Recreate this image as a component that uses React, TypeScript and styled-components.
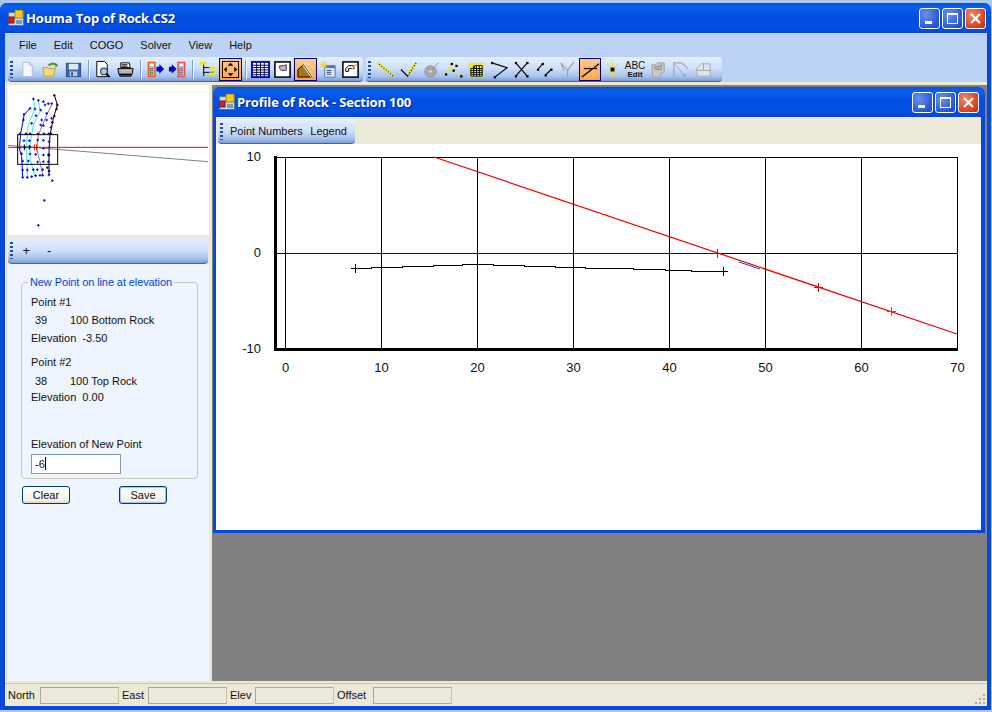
import React, { ReactNode } from 'react';
import styled, { createGlobalStyle } from 'styled-components';

const GlobalStyle = createGlobalStyle`
    html, body {
        margin: 0;
        padding: 0;
        background: #a9c8ea;
        overflow: hidden;
    }
    * {
        box-sizing: border-box;
    }
`;

const UI_FONT = `"Liberation Sans", Arial, sans-serif`;

const Frame = styled.div`
    width: 991px;
    height: 707px;
    margin-top: 3px;
    padding: 0 4px 4px 5px;
    display: flex;
    flex-direction: column;
    background: #0648d8;
    border-radius: 7px 7px 0 0;
    font-family: ${UI_FONT};
    font-size: 11px;
    color: #111;
`;

const TitleBar = styled.div<{ $child?: boolean }>`
    height: 30px;
    flex: none;
    display: flex;
    align-items: center;
    gap: 2px;
    margin: 0 ${(p) => (p.$child ? '-3px' : '-4px')} 0 ${(p) => (p.$child ? '-3px' : '-5px')};
    padding: 0 5px 0 ${(p) => (p.$child ? '6px' : '8px')};
    border-radius: 7px 7px 0 0;
    background: linear-gradient(180deg, #0650dc 0%, #0860ee 12%, #024ee0 45%, #0250e6 75%, #0648d4 100%);
`;

const TitleText = styled.span`
    flex: 1;
    font-family: "Open Sans", "Liberation Sans", sans-serif;
    font-weight: 700;
    font-size: 13px;
    letter-spacing: -0.15px;
    color: #fff;
    text-shadow: 1px 1px 1px #0a2a90;
`;

const CaptionButtons = styled.div`
    display: flex;
    gap: 2px;
`;

const CaptionButton = styled.div<{ $close?: boolean }>`
    width: 21px;
    height: 21px;
    display: flex;
    align-items: center;
    justify-content: center;
    border: 1px solid #fff;
    border-radius: 3px;
    background: ${(p) =>
        p.$close
            ? 'radial-gradient(circle at 30% 30%, #ee8a68, #d8401c 70%, #c03010)'
            : 'radial-gradient(circle at 30% 30%, #6a92ee, #2a58d8 70%, #1c44c0)'};
`;

const MenuBar = styled.div`
    height: 24px;
    flex: none;
    display: flex;
    align-items: center;
    padding-left: 14px;
    gap: 17px;
    background: #bdd3f6;
`;

const MenuItem = styled.span`
    font-size: 11px;
`;

const ToolRow = styled.div`
    height: 25px;
    flex: none;
    display: flex;
    gap: 3px;
    padding-left: 3px;
    background: #bdd3f6;
`;

const Strip = styled.div<{ $w: number }>`
    width: ${(p) => p.$w}px;
    height: 25px;
    display: flex;
    align-items: center;
    padding-left: 2px;
    border-radius: 3px 3px 4px 4px;
    border-bottom: 1px solid #3c64a8;
    background: linear-gradient(180deg, #e4effd 0%, #cfe0fa 45%, #a9c4ee 80%, #7a9ed8 100%);
`;

const Grip = styled.div`
    width: 3px;
    height: 17px;
    flex: none;
    margin-right: 3.5px;
    background: repeating-linear-gradient(180deg, #28508c 0 2px, transparent 2px 4px);
`;

const ToolButton = styled.div<{ $on?: boolean }>`
    width: 22.7px;
    height: 23px;
    flex: none;
    display: flex;
    align-items: center;
    justify-content: center;
    ${(p) =>
        p.$on
            ? 'border: 1px solid #000080; background: linear-gradient(180deg, #ffcb8a, #ffa24a);'
            : ''}
`;

const ToolSep = styled.div`
    width: 1px;
    height: 19px;
    flex: none;
    margin: 0 3px;
    background: #7c9ccc;
    box-shadow: 1px 0 0 #f4f8ff;
`;

const Body = styled.div`
    flex: 1;
    min-height: 0;
    display: flex;
    padding: 3px 0 2px 3px;
    background: #ece9d8;
`;

const SideBar = styled.div`
    width: 201px;
    flex: none;
    display: flex;
    flex-direction: column;
`;

const MapPane = styled.div`
    height: 150px;
    flex: none;
    background: #fff;
`;

const PaneBar = styled.div`
    height: 26px;
    flex: none;
    margin-top: 3px;
    margin-right: 1px;
    display: flex;
    align-items: center;
    padding-left: 2px;
    font-size: 13px;
    border-radius: 3px 3px 4px 4px;
    border-bottom: 1px solid #3c64a8;
    background: linear-gradient(180deg, #e4effd 0%, #cfe0fa 50%, #a9c4ee 80%, #7a9ed8 100%);
`;

const PaneButtons = styled.div`
    display: flex;
    gap: 17px;
    margin-left: 6px;
`;

const FormPane = styled.div`
    flex: 1;
    padding: 12px 11px 0 13px;
    background: #eef5fe;
`;

const Group = styled.fieldset`
    margin: 0;
    width: 177px;
    height: 203px;
    padding: 3px 0 0 9px;
    border: 1px solid #c8c8bc;
    border-radius: 4px;
`;

const GroupTitle = styled.legend`
    padding: 0 2px;
    margin-left: -3px;
    color: #0046d5;
    font-size: 11px;
    letter-spacing: -0.1px;
`;

const FieldLine = styled.div<{ $gap?: number }>`
    height: 15px;
    line-height: 15px;
    margin-top: ${(p) => p.$gap ?? 0}px;
    white-space: nowrap;
`;

const PointNo = styled.span`
    display: inline-block;
    width: 39px;
    padding-left: 4px;
`;

const ElevationInput = styled.div`
    width: 90px;
    height: 20px;
    margin-top: 2px;
    padding: 1px 3px;
    line-height: 16px;
    font-size: 11px;
    background: #fff;
    border: 1px solid #7f9db9;
`;

const Caret = styled.span`
    display: inline-block;
    width: 1px;
    height: 13px;
    vertical-align: -2px;
    background: #000;
`;

const ButtonRow = styled.div`
    display: flex;
    gap: 49px;
    margin: 7px 0 0 1px;
`;

const PushButton = styled.div<{ $def?: boolean }>`
    width: 48px;
    height: 18px;
    line-height: 16px;
    text-align: center;
    border: 1px solid #003c74;
    border-radius: 3px;
    background: linear-gradient(180deg, #fff, #f2f1ea 85%, #d8d4c8);
    ${(p) => (p.$def ? 'box-shadow: inset 0 0 0 1px #a8c4ee;' : '')}
`;

const Splitter = styled.div`
    width: 3px;
    flex: none;
`;

const MdiArea = styled.div`
    flex: 1;
    padding: 2px 2px 0 1px;
    background: #808080;
`;

const ChildWindow = styled.div`
    height: 446px;
    padding: 0 4px 3px 3px;
    display: flex;
    flex-direction: column;
    background: #0648d8;
    border-radius: 7px 7px 0 0;
`;

const ChildToolRow = styled.div`
    height: 27px;
    flex: none;
    padding: 2px 0 0 2px;
    background: #ece9d8;
`;

const ChildStrip = styled.div`
    width: 137px;
    height: 25px;
    display: flex;
    align-items: center;
    padding-left: 2px;
    white-space: nowrap;
    border-radius: 3px 3px 4px 4px;
    border-bottom: 1px solid #3c64a8;
    background: linear-gradient(180deg, #e4effd 0%, #cfe0fa 50%, #a9c4ee 80%, #7a9ed8 100%);
`;

const StripLabel = styled.span`
    padding: 0 4px 0 3.5px;
`;

const ChartPane = styled.div`
    flex: 1;
    background: #fff;
    overflow: hidden;
`;

const StatusBar = styled.div`
    height: 23px;
    flex: none;
    display: flex;
    align-items: center;
    padding-left: 3px;
    border-top: 1px solid #c8c5b2;
    background: #ece9d8;
`;

const StatusLabel = styled.span<{ $w: number }>`
    width: ${(p) => p.$w}px;
    flex: none;
`;

const StatusBox = styled.div`
    width: 79px;
    height: 17px;
    flex: none;
    margin-right: 3px;
    border: 1px solid #aca899;
    border-right-color: #c4c1b0;
`;

const Grow = styled.div`
    flex: 1;
`;

const SizeGrip = styled.svg`
    margin-right: 1px;
    margin-top: 7px;
`;

const Icon = ({ children }: { children: ReactNode }) => (
    <svg width="19" height="19" viewBox="0 0 20 20" fill="none">
        {children}
    </svg>
);

const AppIcon = () => (
    <svg width="16" height="16" viewBox="0 0 16 16">
        <rect x="0.5" y="2.5" width="15" height="13" fill="#c8d8f0" stroke="#51709c" />
        <rect x="7" y="0" width="8" height="8" fill="#f6c820" stroke="#a88410" />
        <rect x="1" y="7" width="5" height="6" fill="#d82020" stroke="#801010" />
        <rect x="8" y="10" width="6" height="4" fill="#7898c8" />
    </svg>
);

const MinGlyph = () => (
    <svg width="13" height="13" viewBox="0 0 13 13">
        <rect x="2" y="9" width="7" height="3" fill="#fff" />
    </svg>
);

const MaxGlyph = () => (
    <svg width="13" height="13" viewBox="0 0 13 13" fill="none">
        <rect x="1.5" y="2.5" width="10" height="9" stroke="#fff" />
        <rect x="1" y="1" width="11" height="2" fill="#fff" />
    </svg>
);

const CloseGlyph = () => (
    <svg width="13" height="13" viewBox="0 0 13 13">
        <path d="M2 2 L11 11 M11 2 L2 11" stroke="#fff" strokeWidth="2.2" />
    </svg>
);

const Caption = () => (
    <CaptionButtons>
        <CaptionButton><MinGlyph /></CaptionButton>
        <CaptionButton><MaxGlyph /></CaptionButton>
        <CaptionButton $close><CloseGlyph /></CaptionButton>
    </CaptionButtons>
);

const dot = (x: number, y: number, c = '#000') => <rect x={x - 1} y={y - 1} width="2.4" height="2.4" fill={c} />;

const firstIcons: (ReactNode | 'sep')[] = [
    <Icon><path d="M5 2.5h7l3 3v12H5z" fill="#f4f8ff" stroke="#a8bcd8" /><path d="M12 2.5v3h3" stroke="#a8bcd8" /></Icon>,
    <Icon><path d="M2 8h5l1 1h7l-2 8H3z" fill="#f4d878" stroke="#c0a040" /><path d="M8 6a5 4 0 0 1 9 0" stroke="#48a028" strokeWidth="2.4" /><path d="M15 8l3-2-3-2z" fill="#48a028" /></Icon>,
    <Icon><rect x="2.5" y="3.5" width="15" height="14" fill="#3c64a8" stroke="#2c4c88" /><rect x="5" y="4" width="10" height="6" fill="#dfe8f6" /><rect x="6" y="12" width="8" height="5" fill="#c0cce0" /><rect x="7.5" y="13" width="2" height="3.5" fill="#2c4c88" /></Icon>,
    'sep',
    <Icon><path d="M4 1.5h8l3 3v13H4z" fill="#fff" stroke="#000" /><circle cx="11.5" cy="12" r="3.5" fill="#a8d0d8" stroke="#305060" strokeWidth="1.3" /><path d="M14 14.5l3.5 3.5" stroke="#000" strokeWidth="2" /></Icon>,
    <Icon><path d="M5 3h9l1 5H5z" fill="#fff" stroke="#000" /><path d="M2 9h16l-1 6H3z" fill="#b8b8b8" stroke="#000" /><path d="M4 15h12v2H4z" fill="#505050" stroke="#000" /><path d="M6 5h6M6 6.5h6" stroke="#000" /></Icon>,
    'sep',
    <Icon><rect x="2.5" y="2.5" width="7" height="15" fill="#b8b8b8" stroke="#f06010" strokeWidth="1.5" /><rect x="4" y="4" width="4" height="2.5" fill="#fff" /><path d="M4 9h4M4 11h4M4 13h4M4 15h4" stroke="#303030" strokeDasharray="1 1" /><path d="M11 7h3V4.5l5 5-5 5V12h-3z" fill="#0000c8" /></Icon>,
    <Icon><path d="M1 7h3V4.5l5 5-5 5V12H1z" fill="#0000c8" /><rect x="10.5" y="2.5" width="7" height="15" fill="#b8b8b8" stroke="#f05050" strokeWidth="1.5" /><rect x="12" y="4" width="4" height="2.5" fill="#fff" /><path d="M12 9h4M12 11h4M12 13h4M12 15h4" stroke="#303030" strokeDasharray="1 1" /></Icon>,
    'sep',
    <Icon><path d="M6 4v13M6 8h6M6 13h6M3 3h5M12 8h5M12 13h5" stroke="#000" /><rect x="2" y="2" width="6" height="3" fill="#f4e800" /><rect x="12" y="7" width="6" height="3" fill="#f4e800" /><rect x="12" y="13" width="6" height="3" fill="#f4e800" /></Icon>,
    <Icon><rect x="1.5" y="1.5" width="17" height="17" stroke="#000" /><path d="M10 3l3 3h-6zM10 17l3-3h-6zM3 10l3-3v6zM17 10l-3-3v6z" fill="#000" /></Icon>,
    'sep',
    <Icon><rect x="1" y="2" width="18" height="16" fill="#fff" stroke="#0000d0" strokeWidth="2" /><path d="M2 5.5h16M2 8h16M2 10.5h16M2 13h16M2 15.5h16M6 3v14M10 3v14M14 3v14" stroke="#000030" /></Icon>,
    <Icon><rect x="2" y="2" width="16" height="16" fill="#fff" stroke="#000" strokeWidth="1.6" /><path d="M7 6h4l3-1v6H9l-2-2z" fill="#b8b8b8" stroke="#404040" /></Icon>,
    <Icon><path d="M2 10l6-5 9 13H2z" fill="#a87818" stroke="#000" /><path d="M8 5l9 13" stroke="#fff" strokeWidth="2.5" /><path d="M8 5l9 13" stroke="#000" strokeWidth="0.8" /><path d="M8 3c4 0 8 2 10 6" stroke="#f4e880" strokeWidth="1.5" /></Icon>,
    <Icon><path d="M6 6h11v12H6z" fill="#dce8f8" stroke="#5078b0" /><rect x="6" y="6" width="11" height="2.5" fill="#5078b0" /><path d="M8 11h5M8 13h5M8 15h5" stroke="#304870" /><path d="M5 1v8M1 5h8M2 2l6 6M8 2l-6 6" stroke="#f4d840" strokeWidth="1.2" /></Icon>,
    <Icon><rect x="2" y="2" width="16" height="16" fill="#fff" stroke="#000" strokeWidth="1.6" /><path d="M5 9l3-3h5l1 3H8v3H5z" fill="#fff" stroke="#000" /><path d="M11 9l5-5 1 1-5 5z" fill="#c8b060" /></Icon>,
];

const line = (a: string) => <path d={a} stroke="#000" strokeWidth="1.2" />;
const yellowLine = (a: string) => <path d={a} stroke="#f4ec10" strokeWidth="3" strokeDasharray="2 1" />;

const secondIcons: { icon: ReactNode; on?: boolean }[] = [
    { icon: <Icon>{line('M2 3l16 14')}{yellowLine('M2 3l16 14')}</Icon> },
    { icon: <Icon>{line('M2 10l7 7L18 3')}{yellowLine('M9 15L18 3')}</Icon> },
    { icon: <Icon><circle cx="9" cy="12" r="6" fill="#a8a8a8" stroke="#909090" /><path d="M10 11l7-8" stroke="#909090" /><circle cx="9" cy="12" r="1.5" fill="#d8d8d8" /></Icon> },
    { icon: <Icon><path d="M2 15l6-11 5 2-3 5 8 6" stroke="#f4ec10" strokeWidth="1.4" strokeDasharray="3 1" />{dot(2, 15)}{dot(8, 4)}{dot(13, 6)}{dot(10, 11)}{dot(18, 17)}</Icon> },
    { icon: <Icon><rect x="2" y="3" width="16" height="15" fill="#f4ec10" /><path d="M4 9h12v8H4zM8 6h8v3H8z" fill="#fff" stroke="#000" /><path d="M4 11h12M4 13h12M4 15h12M7 6v11M10 6v11M13 6v11" stroke="#000" /></Icon> },
    { icon: <Icon><path d="M2 3l16 5L5 18" stroke="#000" strokeWidth="1.2" />{dot(2, 3)}{dot(5, 18)}</Icon> },
    { icon: <Icon><path d="M4 3l12 14M16 3L4 17" stroke="#000" strokeWidth="1.2" />{dot(4, 3)}{dot(16, 3)}{dot(4, 17)}{dot(16, 17)}</Icon> },
    { icon: <Icon><path d="M3 10l5-6M11 16l6-6" stroke="#000" strokeWidth="1.2" />{dot(3, 10)}{dot(8, 4)}{dot(11, 16)}{dot(17, 10)}</Icon> },
    { icon: <Icon><path d="M3 3l7 8 7-9M10 11v7M3 3l3 8" stroke="#a0a0a0" strokeWidth="1.2" /></Icon> },
    { icon: <Icon><path d="M1 18L19 4" stroke="#000" strokeWidth="1.3" /><path d="M13 8v11" stroke="#f4ec10" strokeDasharray="2 1" strokeWidth="1.4" /><path d="M3 9h14" stroke="#000" strokeWidth="1.3" /></Icon>, on: true },
    { icon: <Icon><path d="M10 2v16M2 10h16M4 4l12 12M16 4L4 16" stroke="#ece020" strokeWidth="1.1" /><rect x="8" y="8" width="4" height="4" fill="#000" /></Icon> },
    { icon: <AbcEdit /> },
    { icon: <Icon><path d="M3 5h4l2-2h7v9l-4 3v3H4z" fill="#c8c8c8" stroke="#a0a0a0" /><path d="M6 7h4l3-2v5H8l-2-1z" fill="#b0b0b0" stroke="#909090" /></Icon> },
    { icon: <Icon><path d="M3 18V3h8l7 6" stroke="#a8a8a8" strokeWidth="1.3" /><path d="M3 3l10 12" stroke="#a8a8a8" />{dot(14, 16, '#a0a0a0')}</Icon> },
    { icon: <Icon><path d="M3 17V9l5-5h9v13z" stroke="#a8a8a8" fill="#dce4f0" /><path d="M10 4v7H3M10 11h7" stroke="#a8a8a8" /></Icon> },
];

function AbcEdit() {
    return (
        <svg width="22" height="20" viewBox="0 0 22 20">
            <text x="11" y="9.5" textAnchor="middle" fontFamily="Liberation Sans, sans-serif" fontSize="10" fill="#111">ABC</text>
            <text x="11" y="18" textAnchor="middle" fontFamily="Liberation Sans, sans-serif" fontSize="8" fontWeight="700" fill="#111">Edit</text>
        </svg>
    );
}

const bluePoints: number[][] = [
    [100, 42], [115, 46], [130, 50], [135, 60], [145, 56], [155, 56], [90, 70], [105, 72], [122, 75], [140, 85],
    [72, 88], [108, 92], [125, 105], [140, 105], [155, 100], [70, 105], [95, 115], [122, 120], [130, 122], [153, 127],
    [60, 146], [78, 146], [90, 146], [114, 146], [132, 146], [146, 146], [72, 167], [88, 167], [113, 165], [130, 166], [147, 170],
    [60, 188], [75, 187], [90, 186], [110, 188], [130, 190], [147, 188], [65, 206], [90, 207], [107, 208], [130, 210], [145, 210],
    [68, 228], [85, 228], [113, 231], [130, 230], [145, 230], [68, 255], [82, 255], [100, 254], [112, 254], [128, 254], [142, 248],
    [68, 277], [82, 277], [95, 275], [107, 272], [120, 271], [128, 271], [147, 270], [157, 287], [133, 346], [115, 421],
];

const blackPoints: number[][] = [[163, 31], [172, 60], [170, 72], [163, 93], [157, 112], [153, 146], [147, 210], [147, 258]];

const MiniMap = () => (
    <svg width="200" height="150" viewBox="24 0 600 450" display="block">
        <path d="M90 70L72 90 70 105 62 145 58 190 65 215 68 280" stroke="#0000f0" strokeWidth="3" fill="none" />
        <path d="M100 40l5 30-20 50-5 50 0 40 2 70" stroke="#40e8e8" strokeWidth="3" fill="none" />
        <path d="M115 45l5 35-20 40-10 60 0 40 15 55" stroke="#40e8e8" strokeWidth="3" fill="none" />
        <path d="M155 60l-15 30-25 60-5 40 10 40 8 40" stroke="#808080" strokeWidth="3" fill="none" />
        <path d="M163 30l9 30-12 40-10 50-3 50 0 70" stroke="#000" strokeWidth="3" fill="none" />
        <path d="M24 181L624 230" stroke="#808080" strokeWidth="3" />
        {bluePoints.map(([x, y], i) => (
            <path key={i} d={`M${x - 4} ${y}h8M${x} ${y - 4}v8`} stroke="#0000f0" strokeWidth="3" />
        ))}
        {blackPoints.map(([x, y], i) => (
            <path key={i} d={`M${x - 4} ${y}h8M${x} ${y - 4}v8`} stroke="#000" strokeWidth="3" />
        ))}
        <path d="M24 187H624" stroke="#f00000" strokeWidth="3" />
        <path d="M103 178v18M110 178v18" stroke="#f00000" strokeWidth="3" />
        <path d="M73 178v18M88 180v14" stroke="#000" strokeWidth="3" />
        <rect x="53" y="149" width="120" height="89" fill="none" stroke="#000" strokeWidth="3" />
    </svg>
);

const xTicks = [0, 10, 20, 30, 40, 50, 60, 70];

const cross = (x: number, y: number, c: string, r = 4) => (
    <path d={`M${x - r} ${y + 0.5}h${r * 2 + 1}M${x + 0.5} ${y - r}v${r * 2 + 1}`} stroke={c} />
);

// drawn in screenshot coordinates: x = 285 + 9.6 * value, y = 253 - 9.6 * value
const ProfileChart = () => (
    <svg width="765" height="386" viewBox="216 144 765 386" display="block" shapeRendering="crispEdges">
        {xTicks.map((t) => (
            <path key={t} d={`M${285.5 + t * 9.6} 157V349`} stroke="#000" />
        ))}
        <path d="M275 157.5H958" stroke="#000" />
        <path d="M717 253.5H957" stroke="#000" />
        <path d="M275 253.5H285" stroke="#000" />
        <path d="M285 253.5H717" stroke="#0000e8" />
        <path d="M275.5 156V351" stroke="#000" strokeWidth="3" />
        <path d="M274 349.5H958" stroke="#000" strokeWidth="3" />
        <path d="M355 268.5H371V267.5H402V266.5H433V265.5H462V264.5H493V265.5H524V266.5H555V267.5H585V268.5H633V269.5H665V270.5H691V271.5H723" stroke="#000" fill="none" />
        {cross(355, 268, '#000')}
        {cross(723, 271, '#000')}
        <path d="M434 157L957 334" stroke="#ee0000" fill="none" shapeRendering="auto" strokeWidth="1.2" />
        <path d="M739 262L760 269" stroke="#0000e8" shapeRendering="auto" strokeWidth="0.8" />
        {cross(717, 253, '#ee0000')}
        {cross(818, 287, '#ee0000')}
        {cross(891, 311, '#a05050')}
        <g fontFamily={`"Liberation Sans", Arial, sans-serif`} fontSize="13" fill="#111">
            <text x="261" y="161" textAnchor="end">10</text>
            <text x="261" y="257" textAnchor="end">0</text>
            <text x="261" y="353" textAnchor="end">-10</text>
            {xTicks.map((t) => (
                <text key={t} x={285.5 + t * 9.6} y="372" textAnchor="middle">{t}</text>
            ))}
        </g>
    </svg>
);

const menus = ['File', 'Edit', 'COGO', 'Solver', 'View', 'Help'];

const App: React.FC = () => {
    return (
        <>
            <GlobalStyle />
            <Frame>
                <TitleBar>
                    <AppIcon />
                    <TitleText>Houma Top of Rock.CS2</TitleText>
                    <Caption />
                </TitleBar>
                <MenuBar>
                    {menus.map((m) => (
                        <MenuItem key={m}>{m}</MenuItem>
                    ))}
                </MenuBar>
                <ToolRow>
                    <Strip $w={355}>
                        <Grip />
                        {firstIcons.map((ic, i) =>
                            ic === 'sep' ? (
                                <ToolSep key={i} />
                            ) : (
                                <ToolButton key={i} $on={i === 11 || i === 15}>{ic}</ToolButton>
                            ),
                        )}
                    </Strip>
                    <Strip $w={356}>
                        <Grip />
                        {secondIcons.map((b, i) => (
                            <ToolButton key={i} $on={b.on}>{b.icon}</ToolButton>
                        ))}
                    </Strip>
                </ToolRow>
                <Body>
                    <SideBar>
                        <MapPane>
                            <MiniMap />
                        </MapPane>
                        <PaneBar>
                            <Grip />
                            <PaneButtons>
                                <span>+</span>
                                <span>-</span>
                            </PaneButtons>
                        </PaneBar>
                        <FormPane>
                            <Group>
                                <GroupTitle>New Point on line at elevation</GroupTitle>
                                <FieldLine $gap={4}>Point #1</FieldLine>
                                <FieldLine $gap={3}><PointNo>39</PointNo>100 Bottom Rock</FieldLine>
                                <FieldLine $gap={3}>Elevation&nbsp; -3.50</FieldLine>
                                <FieldLine $gap={9}>Point #2</FieldLine>
                                <FieldLine $gap={4}><PointNo>38</PointNo>100 Top Rock</FieldLine>
                                <FieldLine $gap={1}>Elevation&nbsp; 0.00</FieldLine>
                                <FieldLine $gap={32}>Elevation of New Point</FieldLine>
                                <ElevationInput>-6<Caret /></ElevationInput>
                            </Group>
                            <ButtonRow>
                                <PushButton>Clear</PushButton>
                                <PushButton $def>Save</PushButton>
                            </ButtonRow>
                        </FormPane>
                    </SideBar>
                    <Splitter />
                    <MdiArea>
                        <ChildWindow>
                            <TitleBar $child>
                                <AppIcon />
                                <TitleText>Profile of Rock - Section 100</TitleText>
                                <Caption />
                            </TitleBar>
                            <ChildToolRow>
                                <ChildStrip>
                                    <Grip />
                                    <StripLabel>Point Numbers</StripLabel>
                                    <StripLabel>Legend</StripLabel>
                                </ChildStrip>
                            </ChildToolRow>
                            <ChartPane>
                                <ProfileChart />
                            </ChartPane>
                        </ChildWindow>
                    </MdiArea>
                </Body>
                <StatusBar>
                    <StatusLabel $w={32}>North</StatusLabel>
                    <StatusBox />
                    <StatusLabel $w={26}>East</StatusLabel>
                    <StatusBox />
                    <StatusLabel $w={25}>Elev</StatusLabel>
                    <StatusBox />
                    <StatusLabel $w={36}>Offset</StatusLabel>
                    <StatusBox />
                    <Grow />
                    <SizeGrip width="12" height="12" viewBox="0 0 12 12">
                        <path d="M9 1h2v2H9zM5 5h2v2H5zM9 5h2v2H9zM1 9h2v2H1zM5 9h2v2H5zM9 9h2v2H9z" fill="#b0ac98" />
                    </SizeGrip>
                </StatusBar>
            </Frame>
        </>
    );
};

export default App;
